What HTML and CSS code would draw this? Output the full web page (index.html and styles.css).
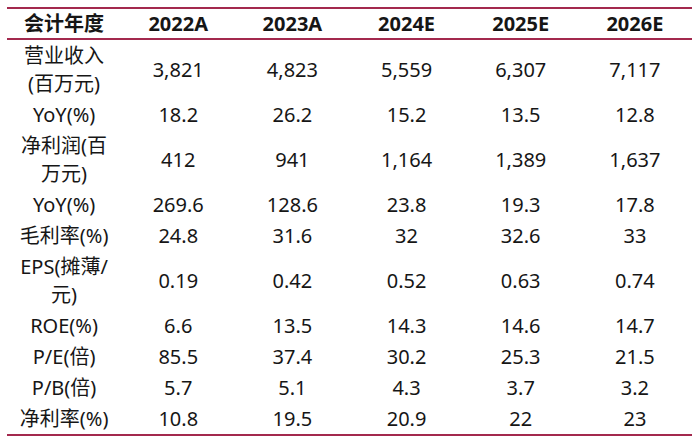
FILE: index.html
```html
<!DOCTYPE html>
<html lang="zh-CN">
<head>
<meta charset="utf-8">
<title>盈利预测</title>
<link rel="stylesheet" href="styles.css">
</head>
<body>
<div class="wrap">
<table class="fin">
  <thead>
    <tr><th>会计年度</th><th>2022A</th><th>2023A</th><th>2024E</th><th>2025E</th><th>2026E</th></tr>
  </thead>
  <tbody>
    <tr><td>营业收入(百万元)</td><td>3,821</td><td>4,823</td><td>5,559</td><td>6,307</td><td>7,117</td></tr>
    <tr><td>YoY(%)</td><td>18.2</td><td>26.2</td><td>15.2</td><td>13.5</td><td>12.8</td></tr>
    <tr><td>净利润(百万元)</td><td>412</td><td>941</td><td>1,164</td><td>1,389</td><td>1,637</td></tr>
    <tr><td>YoY(%)</td><td>269.6</td><td>128.6</td><td>23.8</td><td>19.3</td><td>17.8</td></tr>
    <tr><td>毛利率(%)</td><td>24.8</td><td>31.6</td><td>32</td><td>32.6</td><td>33</td></tr>
    <tr><td>EPS(摊薄/元)</td><td>0.19</td><td>0.42</td><td>0.52</td><td>0.63</td><td>0.74</td></tr>
    <tr><td>ROE(%)</td><td>6.6</td><td>13.5</td><td>14.3</td><td>14.6</td><td>14.7</td></tr>
    <tr><td>P/E(倍)</td><td>85.5</td><td>37.4</td><td>30.2</td><td>25.3</td><td>21.5</td></tr>
    <tr><td>P/B(倍)</td><td>5.7</td><td>5.1</td><td>4.3</td><td>3.7</td><td>3.2</td></tr>
    <tr><td>净利率(%)</td><td>10.8</td><td>19.5</td><td>20.9</td><td>22</td><td>23</td></tr>
  </tbody>
</table>
</div>
</body>
</html>
```

FILE: styles.css
```css
html, body {
  margin: 0;
  padding: 0;
  background: #ffffff;
}

.wrap {
  padding: 7px 8px 0 7px;
}

.fin {
  width: 685px;
  table-layout: fixed;
  border-collapse: collapse;
  font-family: "Noto Sans", "Noto Sans CJK SC", sans-serif;
  font-size: 20px;
  color: #161616;
}

.fin th {
  font-weight: 700;
  height: 29px;
  line-height: 29px;
  padding: 0;
  text-align: center;
  border-top: 2px solid #a3294e;
  border-bottom: 2px solid #a3294e;
}

.fin td {
  line-height: 28px;
  padding: 2px 6px 1px;
  text-align: center;
  vertical-align: middle;
}

.fin tbody tr:last-child td {
  border-bottom: 2px solid #a3294e;
}
```
